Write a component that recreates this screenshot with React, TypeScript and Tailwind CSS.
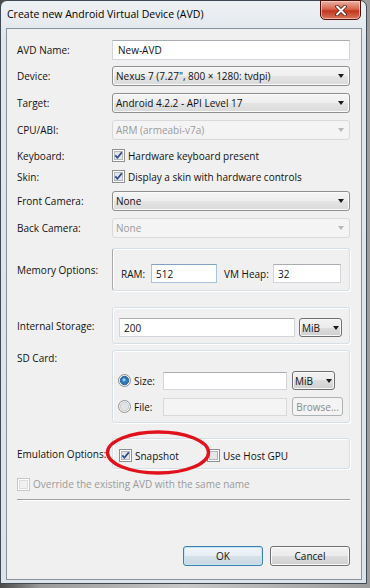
import React from "react";

function Arrow({ disabled }: { disabled?: boolean }) {
  return (
    <span
      className={
        "block w-0 h-0 border-x-[3px] border-t-[4px] border-x-transparent " +
        (disabled ? "border-t-[#b8b8b8]" : "border-t-[#1a1a1a]")
      }
    />
  );
}

function Combo({ text, disabled }: { text: string; disabled?: boolean }) {
  return (
    <div
      className={
        "flex items-center justify-between h-[20px] w-full rounded-[3px] border pl-[3px] pr-[5px] " +
        (disabled
          ? "border-[#d9d9d9] bg-[#f4f4f4] text-[#9a9a9a]"
          : "border-[#8e8f8f] bg-[linear-gradient(#f5f5f5,#eeeeee_50%,#e4e4e4_50%,#dadada)] shadow-[inset_0_0_0_1px_#fbfbfb]")
      }
    >
      <span>{text}</span>
      <Arrow disabled={disabled} />
    </div>
  );
}

function SmallCombo() {
  return (
    <div className="flex items-center justify-between h-[19px] w-[43px] rounded-[3px] border border-[#707070] bg-[linear-gradient(#f2f2f2,#ebebeb_50%,#dddddd_50%,#cfcfcf)] shadow-[inset_0_0_0_1px_#f8f8f8] pl-[2px] pr-[2px]">
      <span>MiB</span>
      <Arrow />
    </div>
  );
}

function TextBox({
  value,
  className,
  disabled,
  focus,
}: {
  value?: string;
  className?: string;
  disabled?: boolean;
  focus?: boolean;
}) {
  return (
    <div
      className={
        "flex items-center border pl-[4px] " +
        (disabled
          ? "bg-[#f4f4f4] border-[#d9d9d9] "
          : focus
          ? "bg-white border-[#a9c3dd] border-t-[#7fa2c6] "
          : "bg-white border-[#d2d5db] border-t-[#abadb3] ") +
        (className || "")
      }
    >
      {value}
    </div>
  );
}

function CheckBox({ checked, disabled }: { checked?: boolean; disabled?: boolean }) {
  return (
    <svg width="13" height="13" viewBox="0 0 13 13" className="shrink-0">
      <rect x="0.5" y="0.5" width="12" height="12" fill="#fdfdfd" stroke={disabled ? "#c8c8c8" : "#8e8f8f"} />
      <rect
        x="2.5"
        y="2.5"
        width="8"
        height="8"
        fill={disabled ? "#f1f1f1" : "#e4e6e9"}
        stroke={disabled ? "#dcdcdc" : "#b3b8be"}
      />
      {checked && (
        <path d="M3.3 6.4 L5.4 8.8 L9.8 3.4" stroke="#2c4a8f" strokeWidth="1.7" fill="none" />
      )}
    </svg>
  );
}

function Radio({ checked }: { checked?: boolean }) {
  return (
    <svg width="13" height="13" viewBox="0 0 13 13" className="shrink-0">
      <circle cx="6.5" cy="6.5" r="6" fill="#f4f4f4" stroke="#8e8f8f" />
      <circle
        cx="6.5"
        cy="6.5"
        r="4.2"
        fill={checked ? "#2f78b6" : "#e1e3e6"}
        stroke={checked ? "#1d4f82" : "#c2c6cb"}
        strokeWidth="0.8"
      />
      {checked && <circle cx="6" cy="5.8" r="1.6" fill="#8fd0f5" />}
    </svg>
  );
}

function Row({
  label,
  children,
  className,
  alignTop,
}: {
  label: string;
  children: React.ReactNode;
  className?: string;
  alignTop?: boolean;
}) {
  return (
    <div className={"flex " + (alignTop ? "items-start " : "items-center ") + (className || "")}>
      <div className={"w-[95px] shrink-0 " + (alignTop ? "pt-[3px]" : "")}>{label}</div>
      <div className="w-[238px] shrink-0">{children}</div>
    </div>
  );
}

function Group({ className, children }: { className?: string; children: React.ReactNode }) {
  return (
    <div
      className={
        "rounded-[3px] border border-[#d5dfe5] shadow-[inset_1px_1px_0_#ffffff,1px_1px_0_#ffffff] " +
        (className || "")
      }
    >
      {children}
    </div>
  );
}

function Button({
  text,
  def,
  disabled,
  className,
}: {
  text: string;
  def?: boolean;
  disabled?: boolean;
  className?: string;
}) {
  return (
    <div
      className={
        "flex items-center justify-center rounded-[3px] border " +
        (disabled
          ? "border-[#adb2b5] bg-[#f4f4f4] text-[#8a8a8a] "
          : def
          ? "border-[#3c7fb1] bg-[linear-gradient(#f0f6fa,#e6eef4_50%,#d6e2ea_50%,#c9d7e1)] shadow-[inset_0_0_0_1px_#c4e5f6] "
          : "border-[#707070] bg-[linear-gradient(#f2f2f2,#ebebeb_50%,#dddddd_50%,#cfcfcf)] shadow-[inset_0_0_0_1px_#fafafa] ") +
        (className || "")
      }
    >
      {text}
    </div>
  );
}

export default function App() {
  return (
    <div className="relative w-[370px] h-[588px] overflow-hidden bg-[linear-gradient(90deg,#4a4a4a,#9a9a9a_40px,#c8c8c8_50%,#9c9c9c)] font-['Open_Sans',sans-serif] text-[10px] leading-none text-[#111]">
      <div className="flex flex-col w-[367px] h-[584px] rounded-t-[7px] border border-[#3f4a55] bg-[linear-gradient(#eef1f4,#e0e6eb_40px,#dde3e9)]">
        {/* title bar */}
        <div className="flex items-start h-[27px] pl-[6px] pr-[5px]">
          <span className="mt-[8px] text-[10.5px] text-black">Create new Android Virtual Device (AVD)</span>
          <div className="ml-auto -mt-px flex items-center justify-center w-[41px] h-[20px] rounded-b-[5px] border border-[#4a120b] bg-[linear-gradient(#eab2a4,#d8654c_45%,#c4351d_55%,#d8765c)] shadow-[inset_0_0_0_1px_rgba(255,220,210,0.6)]">
            <svg width="14" height="11" viewBox="0 0 14 11">
              <path d="M3 1.5 L11 9.5 M11 1.5 L3 9.5" stroke="#5a1a10" strokeWidth="3.6" strokeLinecap="round" />
              <path d="M3 1.5 L11 9.5 M11 1.5 L3 9.5" stroke="#ffffff" strokeWidth="2" strokeLinecap="round" />
            </svg>
          </div>
        </div>
        {/* client area */}
        <div className="ml-[5px] mr-[4px] h-[552px] border border-[#8593a1] bg-[#f0f0f0] flex flex-col pt-[11px] pl-[10px] pr-[11px]">
          <Row label="AVD Name:">
            <TextBox value="New-AVD" className="h-[20px] pl-[5px]" />
          </Row>
          <Row label="Device:" className="mt-[6px]">
            <Combo text={'Nexus 7 (7.27", 800 \u00d7 1280: tvdpi)'} />
          </Row>
          <Row label="Target:" className="mt-[7px]">
            <Combo text="Android 4.2.2 - API Level 17" />
          </Row>
          <Row label="CPU/ABI:" className="mt-[7px]">
            <Combo text="ARM (armeabi-v7a)" disabled />
          </Row>
          <Row label="Keyboard:" className="mt-[7px] h-[17px]">
            <div className="flex items-center gap-[3px]">
              <CheckBox checked />
              <span>Hardware keyboard present</span>
            </div>
          </Row>
          <Row label="Skin:" className="mt-[4px] h-[17px]">
            <div className="flex items-center gap-[3px]">
              <CheckBox checked />
              <span>Display a skin with hardware controls</span>
            </div>
          </Row>
          <Row label="Front Camera:" className="mt-[6px]">
            <Combo text="None" />
          </Row>
          <Row label="Back Camera:" className="mt-[7px]">
            <Combo text="None" disabled />
          </Row>
          <Row label="Memory Options:" className="mt-[10px]">
            <Group className="h-[43px] pt-[15px] pl-[8px] flex items-start border-l-[#a9a9a9]">
              <span className="w-[30px] h-[19px] flex items-center">RAM:</span>
              <TextBox value="512" focus className="w-[66px] h-[19px]" />
              <span className="ml-[7px] w-[49px] h-[19px] flex items-center">VM Heap:</span>
              <TextBox value="32" className="w-[68px] h-[19px]" />
            </Group>
          </Row>
          <Row label="Internal Storage:" className="mt-[16px]">
            <Group className="h-[37px] pt-[10px] pl-[6px] flex items-start">
              <TextBox value="200" className="w-[176px] h-[19px]" />
              <div className="ml-[4px]">
                <SmallCombo />
              </div>
            </Group>
          </Row>
          <Row label="SD Card:" className="mt-[6px]" alignTop>
            <Group className="h-[73px] pt-[20px] pl-[5px] flex flex-col">
              <div className="flex items-center h-[19px]">
                <div className="w-[45px] flex items-center gap-[3px]">
                  <Radio checked />
                  <span>Size:</span>
                </div>
                <TextBox className="w-[124px] h-[18px]" />
                <div className="ml-[5px]">
                  <SmallCombo />
                </div>
              </div>
              <div className="flex items-center h-[19px] mt-[7px]">
                <div className="w-[45px] flex items-center gap-[3px]">
                  <Radio />
                  <span>File:</span>
                </div>
                <TextBox disabled className="w-[124px] h-[18px]" />
                <Button text="Browse..." disabled className="ml-[5px] w-[51px] h-[19px]" />
              </div>
            </Group>
          </Row>
          <Row label="Emulation Options:" className="mt-[15px]">
            <Group className="h-[31px] pt-[4px] pl-[6px] flex items-center">
              <div className="w-[88px] flex items-center gap-[3px]">
                <CheckBox checked />
                <span>Snapshot</span>
              </div>
              <div className="flex items-center gap-[3px]">
                <CheckBox />
                <span>Use Host GPU</span>
              </div>
            </Group>
          </Row>
          <div className="mt-[7px] h-[16px] flex items-center gap-[3px] text-[#9a9a9a]">
            <CheckBox disabled />
            <span>Override the existing AVD with the same name</span>
          </div>
          <div className="mt-[7px] w-[333px] h-[2px] border-t border-t-[#a0a0a0] border-b border-b-white" />
          <div className="mt-[45px] flex justify-end gap-[7px] w-[333px]">
            <Button text="OK" def className="w-[80px] h-[20px]" />
            <Button text="Cancel" className="w-[80px] h-[20px]" />
          </div>
        </div>
      </div>
      {/* red annotation ellipse */}
      <svg className="absolute left-[105px] top-[429px]" width="106" height="47" viewBox="0 0 106 47">
        <ellipse cx="53" cy="23.5" rx="50.5" ry="20.5" fill="none" stroke="#e2121c" strokeWidth="3.4" />
      </svg>
    </div>
  );
}
